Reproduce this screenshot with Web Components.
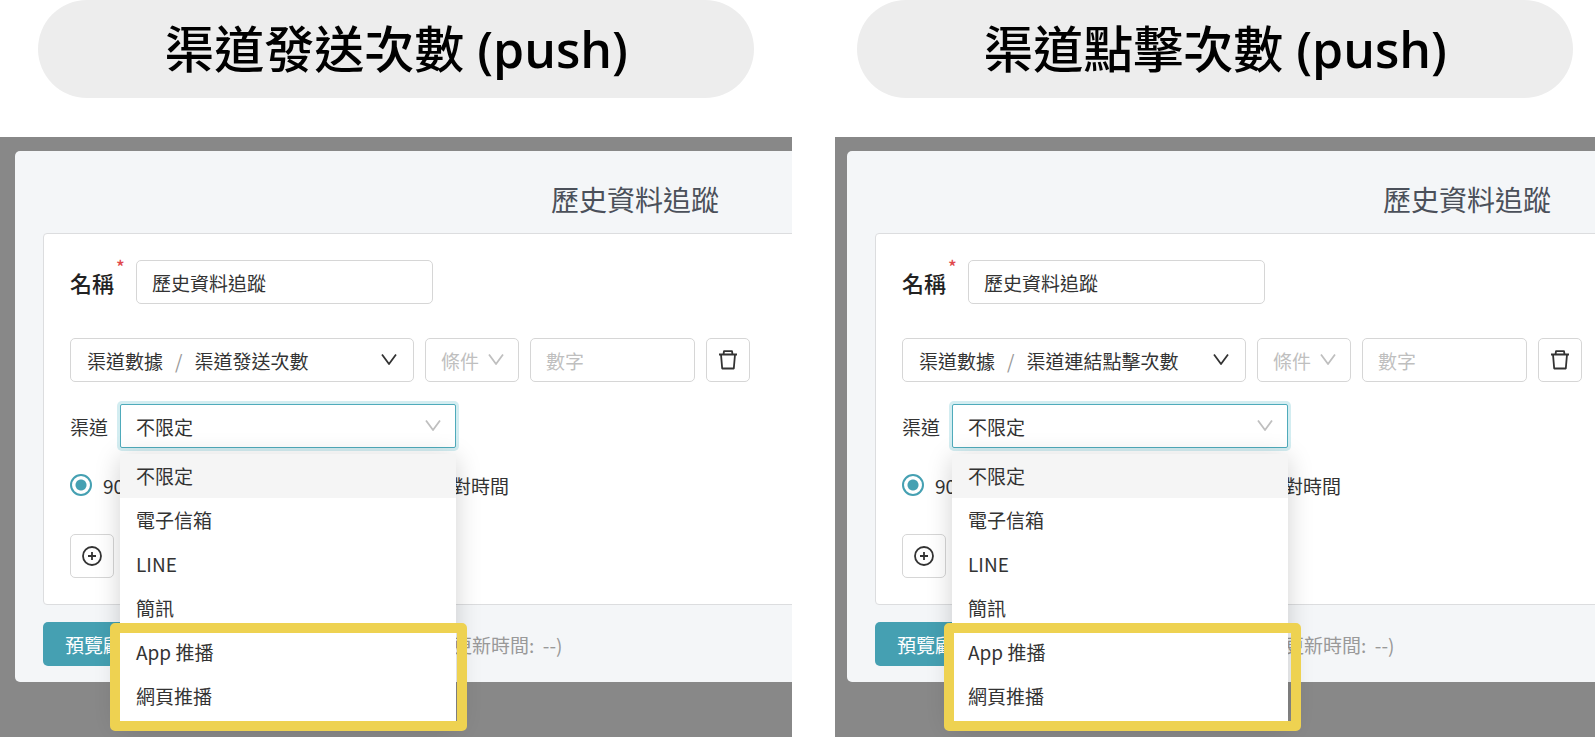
<!DOCTYPE html>
<html lang="zh-Hant">
<head>
<meta charset="UTF-8">
<meta name="viewport" content="width=device-width, initial-scale=1">
<title>歷史資料追蹤</title>
<style>
    body {
        margin: 0;
        background: #fff;
        font-family: "Noto Sans CJK TC", sans-serif;
    }

    compare-board channel-column:first-child {
        --pill-margin: 38px;
        --modal-left: 15px;
        --mark-left: -10px;
        --mark-right: -11px;
    }

    compare-board channel-column:last-child {
        --pill-margin: 22px;
        --modal-left: 12px;
        --mark-left: -8px;
        --mark-right: -13px;
    }
</style>
</head>
<body>
<compare-board>
    <channel-column heading="渠道發送次數" kind="(push)">
        <tracking-form metric="渠道發送次數"></tracking-form>
    </channel-column>
    <channel-column heading="渠道點擊次數" kind="(push)">
        <tracking-form metric="渠道連結點擊次數"></tracking-form>
    </channel-column>
</compare-board>

<script>
const ICONS = {
    down: `<path d="M1 2.5 L8 12 L15 2.5" />`,
    trash: `<path d="M1 4.5 H19 M3 4.5 L4.2 18.5 H15.8 L17 4.5 M5.5 4.5 L6 1.2 H14 L14.5 4.5" />`,
    plus: `<circle cx="10" cy="10" r="9" /><path d="M10 6 V14 M6 10 H14" />`
};

class UiIcon extends HTMLElement {
    constructor() {
        super();
        this.attachShadow({ mode: "open" });
    }

    connectedCallback() {
        const name = this.getAttribute("name");
        const box = name === "down" ? "0 0 16 16" : "0 0 20 20";

        this.shadowRoot.innerHTML = `
            <style>
                :host {
                    display: block;
                    flex: none;
                    width: 20px;
                    height: 20px;
                }

                :host([name="down"]) {
                    width: 16px;
                    height: 16px;
                }

                svg {
                    display: block;
                    width: 100%;
                    height: 100%;
                    fill: none;
                    stroke: currentColor;
                    stroke-width: 1.8;
                    stroke-linejoin: round;
                }
            </style>
            <svg viewBox="${box}" aria-hidden="true">${ICONS[name]}</svg>
        `;
    }
}

class CompareBoard extends HTMLElement {
    constructor() {
        super();
        this.attachShadow({ mode: "open" });
        this.shadowRoot.innerHTML = `
            <style>
                :host {
                    display: grid;
                    grid-template-columns: minmax(0, 792fr) minmax(0, 760fr);
                    gap: 43px;
                    min-height: 100vh;
                }
            </style>
            <slot></slot>
        `;
    }
}

class ChannelColumn extends HTMLElement {
    constructor() {
        super();
        this.attachShadow({ mode: "open" });
    }

    connectedCallback() {
        this.shadowRoot.innerHTML = `
            <style>
                :host {
                    display: flex;
                    flex-direction: column;
                    gap: 39px;
                }

                h2 {
                    margin: 0 var(--pill-margin);
                    border-radius: 49px;
                    background: #ededed;
                    color: #000;
                    font-family: "Open Sans", "Noto Sans CJK TC", sans-serif;
                    font-size: 50px;
                    font-weight: 500;
                    line-height: 98px;
                    text-align: center;
                    white-space: nowrap;
                }

                h2 span {
                    font-weight: 600;
                }

                .fondo {
                    flex: 1;
                    overflow: hidden;
                    box-sizing: border-box;
                    padding: 14px 0 54px var(--modal-left);
                    background: #888;
                }
            </style>
            <h2>${this.getAttribute("heading")} <span>${this.getAttribute("kind")}</span></h2>
            <div class="fondo"><slot></slot></div>
        `;
    }
}

class ChannelMenu extends HTMLElement {
    constructor() {
        super();
        this.attachShadow({ mode: "open" });
        this.options = ["不限定", "電子信箱", "LINE", "簡訊", "App 推播", "網頁推播"];
        this.render();
    }

    render() {
        const items = this.options
            .map((text, i) => `<li role="option" aria-selected="${i === 0}">${text}</li>`)
            .join("");

        this.shadowRoot.innerHTML = `
            <style>
                :host {
                    display: block;
                    background: #fff;
                    box-shadow: 0 4px 24px rgba(0, 0, 0, 0.18);
                }

                ul {
                    margin: 0;
                    padding: 0 0 3px;
                    list-style: none;
                }

                li {
                    padding: 0 16px;
                    font-size: 19px;
                    line-height: 44px;
                    color: #333;
                }

                li[aria-selected="true"] {
                    background: #f5f5f5;
                }

                /* frame round the two push options */
                .marca {
                    position: absolute;
                    left: var(--mark-left);
                    right: var(--mark-right);
                    bottom: -10px;
                    height: 88px;
                    border: 10px solid #eed251;
                    border-radius: 5px;
                    pointer-events: none;
                }
            </style>
            <ul role="listbox" aria-label="渠道">${items}</ul>
            <div class="marca"></div>
        `;
    }
}

class TrackingForm extends HTMLElement {
    constructor() {
        super();
        this.attachShadow({ mode: "open" });
    }

    connectedCallback() {
        this.render();
    }

    styles() {
        return `
            :host {
                display: block;
                box-sizing: border-box;
                width: 1240px;
                padding: 0 28px 16px;
                border-radius: 5px;
                background: #f4f6f8;
                color: #333;
                font-size: 19px;
            }

            h3 {
                margin: 0;
                padding: 28px 0 14px;
                color: #4b505a;
                font-size: 28px;
                font-weight: 400;
                line-height: 40px;
                text-align: center;
            }

            .card {
                box-sizing: border-box;
                padding: 26px;
                border: 1px solid #dcdddf;
                border-radius: 4px;
                background: #fff;
            }

            .fila {
                display: flex;
                align-items: center;
            }

            .nombre {
                gap: 22px;
                margin-bottom: 34px;
            }

            .nombre label {
                position: relative;
                font-size: 22px;
                font-weight: 500;
                color: #222;
            }

            .nombre label span {
                position: absolute;
                left: 100%;
                top: -12px;
                margin-left: 2px;
                color: #e0484c;
                font-size: 18px;
                line-height: 24px;
            }

            .datos {
                gap: 11px;
                margin-bottom: 22px;
            }

            .canal {
                gap: 12px;
                margin-bottom: 26px;
            }

            input[type="text"], select, button {
                box-sizing: border-box;
                height: 44px;
                margin: 0;
                border: 1px solid #d6d6d6;
                border-radius: 5px;
                background: #fff;
                color: inherit;
                font: inherit;
            }

            input[type="text"] {
                padding: 0 15px;
                outline: none;
            }

            #name { width: 297px; }
            #number { width: 165px; }

            ::placeholder {
                color: #bfbfbf;
                opacity: 1;
            }

            .cascada {
                display: flex;
                align-items: center;
                width: 344px;
                padding: 0 16px;
                text-align: left;
            }

            .cascada i {
                margin: 0 12px;
                color: #999;
                font-style: normal;
            }

            .cascada ui-icon { margin-left: auto; }

            .lista {
                position: relative;
                color: #bfbfbf;
            }

            .lista select {
                width: 100%;
                padding: 0 15px;
                appearance: none;
                outline: none;
            }

            .lista ui-icon {
                position: absolute;
                right: 15px;
                top: 14px;
                pointer-events: none;
            }

            .condicion { width: 94px; }
            .abierta { width: 336px; }

            .abierta select {
                border: 1px solid #4fabbb;
                border-radius: 2px;
                box-shadow: 0 0 0 3px #d3edf1;
                color: #333;
            }

            channel-menu {
                position: absolute;
                top: 50px;
                left: 0;
                right: 0;
                z-index: 2;
            }

            .icono {
                display: grid;
                place-items: center;
                width: 44px;
                padding: 0;
            }

            .tiempo {
                gap: 11px;
                height: 22px;
                margin-bottom: 38px;
            }

            /* second label shows past the right edge of the open menu */
            .tiempo label:last-child { margin-left: 317px; }

            input[type="radio"] {
                appearance: none;
                box-sizing: border-box;
                width: 22px;
                height: 22px;
                margin: 0;
                border: 2px solid #45a0b2;
                border-radius: 50%;
                background: radial-gradient(circle, #45a0b2 5px, #fff 6px);
            }

            .pie {
                justify-content: flex-start;
                margin-top: 17px;
                color: #999;
            }

            .pie button {
                width: 130px;
                padding: 0 22px;
                border: 0;
                background: #45a0b2;
                color: #fff;
                text-align: left;
            }

            .pie span {
                margin-left: 280px;
                white-space: pre;
            }
        `;
    }

    render() {
        this.shadowRoot.innerHTML = `
            <style>${this.styles()}</style>
            <h3>歷史資料追蹤</h3>
            <div class="card">
                <div class="fila nombre">
                    <label for="name">名稱<span>*</span></label>
                    <input type="text" id="name" value="歷史資料追蹤">
                </div>
                <div class="fila datos">
                    <button type="button" class="cascada">
                        渠道數據<i>/</i>${this.getAttribute("metric")}
                        <ui-icon name="down"></ui-icon>
                    </button>
                    <div class="lista condicion">
                        <select aria-label="條件"><option>條件</option></select>
                        <ui-icon name="down"></ui-icon>
                    </div>
                    <input type="text" id="number" placeholder="數字" aria-label="數字">
                    <button type="button" class="icono" aria-label="刪除"><ui-icon name="trash"></ui-icon></button>
                </div>
                <div class="fila canal">
                    <label for="channel">渠道</label>
                    <div class="lista abierta">
                        <select id="channel"><option>不限定</option></select>
                        <ui-icon name="down"></ui-icon>
                        <channel-menu></channel-menu>
                    </div>
                </div>
                <div class="fila tiempo">
                    <input type="radio" id="relative" name="range" checked>
                    <label for="relative">90</label>
                    <label>對時間</label>
                </div>
                <button type="button" class="icono" aria-label="新增"><ui-icon name="plus"></ui-icon></button>
            </div>
            <div class="fila pie">
                <button type="button">預覽顧</button>
                <span>更新時間:  --)</span>
            </div>
        `;
    }
}

customElements.define("ui-icon", UiIcon);
customElements.define("compare-board", CompareBoard);
customElements.define("channel-column", ChannelColumn);
customElements.define("channel-menu", ChannelMenu);
customElements.define("tracking-form", TrackingForm);
</script>
</body>
</html>
